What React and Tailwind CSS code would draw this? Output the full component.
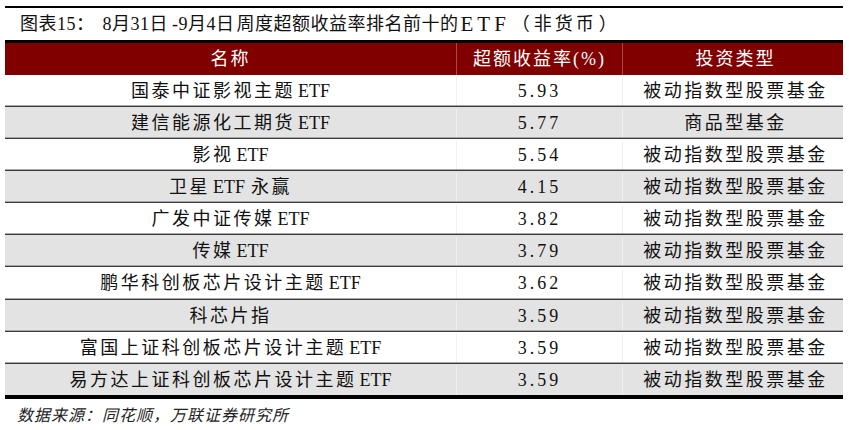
import React from "react";

const rows = [
  { name: "国泰中证影视主题", ret: "5.93", type: "被动指数型股票基金", etf: true },
  { name: "建信能源化工期货", ret: "5.77", type: "商品型基金", etf: true },
  { name: "影视", ret: "5.54", type: "被动指数型股票基金", etf: true },
  { name: "卫星", ret: "4.15", type: "被动指数型股票基金", etf: true, tail: "永赢" },
  { name: "广发中证传媒", ret: "3.82", type: "被动指数型股票基金", etf: true },
  { name: "传媒", ret: "3.79", type: "被动指数型股票基金", etf: true },
  { name: "鹏华科创板芯片设计主题", ret: "3.62", type: "被动指数型股票基金", etf: true },
  { name: "科芯片指", ret: "3.59", type: "被动指数型股票基金" },
  { name: "富国上证科创板芯片设计主题", ret: "3.59", type: "被动指数型股票基金", etf: true },
  { name: "易方达上证科创板芯片设计主题", ret: "3.59", type: "被动指数型股票基金", etf: true },
];

const App = () => {
  return (
    <div className="w-[849px] h-[430px] bg-white text-[#111] font-['Liberation_Serif','Noto_Sans_CJK_SC',serif] overflow-hidden">
      <div className="pt-[6px] pl-[5px] w-[843px]">
        {/* title */}
        <div className="h-[2px] bg-black" />
        <div className="h-[32px] flex items-center pl-[15px] text-[18px] leading-none whitespace-nowrap">
          <span className="tracking-[0.5px]">图表15：</span>
          <span className="ml-[8px] tracking-[0.5px]">8月31日</span>
          <span className="ml-[4px] tracking-[0.5px]">-9月4日</span>
          <span className="ml-[2px] tracking-[0.5px]">周度超额收益率排名前十的</span>
          <span className="ml-[2px] text-[21px] tracking-[4px]">ETF</span>
          <span className="ml-[2px]">（</span>
          <span className="ml-[4px] tracking-[3px]">非货币</span>
          <span className="ml-[2px]">）</span>
        </div>
        <div className="h-[3px] bg-black" />

        {/* header */}
        <div className="grid grid-cols-[452px_166px_225px] h-[32px] bg-[#800000] text-white text-[18px] tracking-[2px]">
          <div className="flex items-center justify-center border-r border-[#a84848]">名称</div>
          <div className="flex items-center justify-center border-r border-[#a84848]">
            超额收益率(%)
          </div>
          <div className="flex items-center justify-center">投资类型</div>
        </div>

        {/* rows */}
        {rows.map((r, i) => (
          <div key={i}>
            <div
              className={
                "grid grid-cols-[452px_166px_225px] text-[18px] pt-[2px] " +
                (i === 6 || i === 9 ? "h-[31px] " : "h-[30px] ") +
                (i % 2 === 1 ? "bg-[#e3e3e3]" : "bg-white")
              }
            >
              <div className="flex items-center justify-center border-r border-[#f0f0f0] whitespace-nowrap">
                <span className="tracking-[2.5px]">{r.name}</span>
                {r.etf && <span className="ml-[3px]">ETF</span>}
                {r.tail && <span className="ml-[6px] tracking-[2.5px]">{r.tail}</span>}
              </div>
              <div className="flex items-center justify-center tracking-[3px] border-r border-[#f0f0f0]">
                {r.ret}
              </div>
              <div className="flex items-center justify-center tracking-[2.5px]">{r.type}</div>
            </div>
            {i < rows.length - 1 && (
              <>
                <div className="h-px bg-[#a8a8a8]" />
                <div className="h-px bg-[#3a3a3a]" />
              </>
            )}
          </div>
        ))}
        <div className="h-[4px] bg-black" />

        {/* source */}
        <div className="pl-[12px] pt-[9px] text-[16px] italic tracking-[1px] text-[#222] leading-none">
          数据来源：同花顺，万联证券研究所
        </div>
      </div>
    </div>
  );
};

export default App;
